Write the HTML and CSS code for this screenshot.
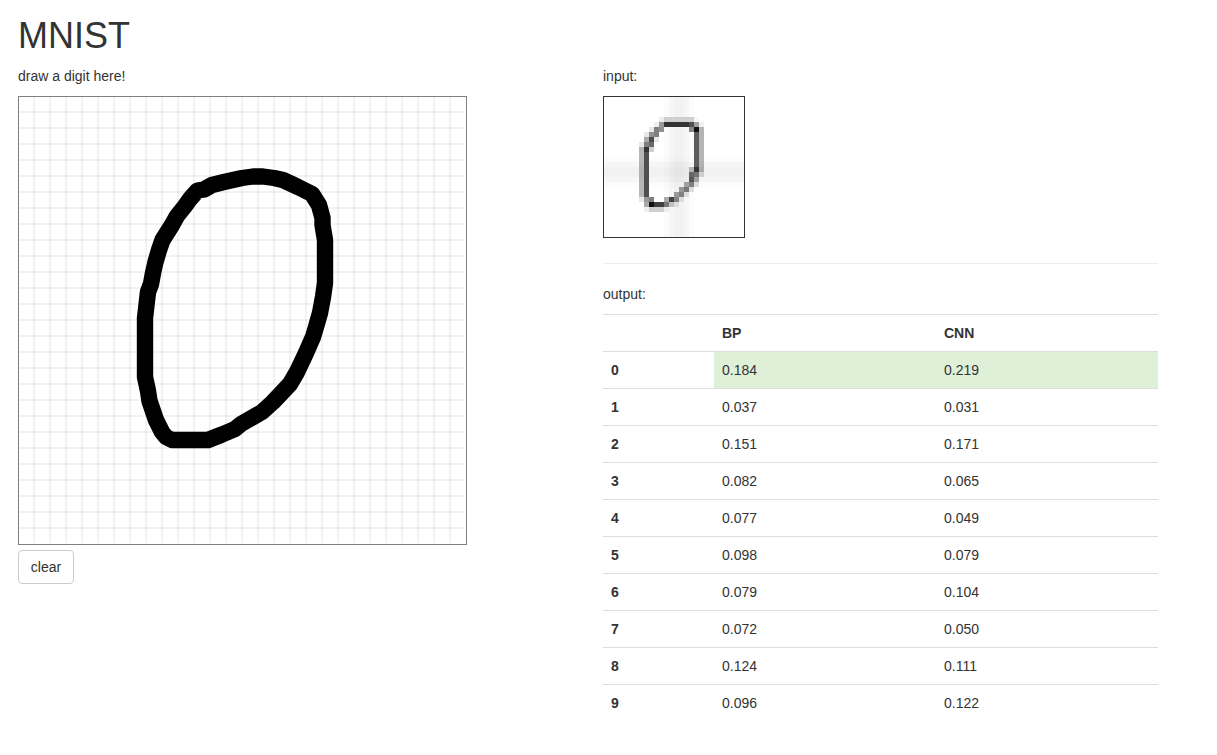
FILE: index.html
```html
<!DOCTYPE html>
<html lang="en">
<head>
<meta charset="utf-8">
<title>MNIST</title>
<link rel="stylesheet" href="styles.css">
</head>
<body>
<div class="container">
  <h1>MNIST</h1>
  <div class="row">
    <section class="col">
      <p>draw a digit here!</p>
      <svg class="pad" viewBox="0 0 449 449">
        <defs>
          <pattern id="grid" width="16" height="16" patternUnits="userSpaceOnUse">
            <g fill="#000" fill-opacity=".05" shape-rendering="crispEdges">
              <path d="M0 0H1V16H0ZM15 0H16V16H15Z"/>
              <path d="M0 0H16V1H0ZM0 15H16V16H0Z"/>
            </g>
          </pattern>
        </defs>
        <rect x="1" y="1" width="447" height="447" fill="#fff"/>
        <rect x="1" y="1" width="446" height="446" fill="url(#grid)"/>
        <rect x=".5" y=".5" width="448" height="448" fill="none" stroke="#808080"/>
        <path class="ink" transform="translate(-18 -96)" d="M204 189.500L197.500 190.500L190 199L185 206L177 216L172 225L162.500 240L159 250L155.500 262L153 273L151 284L148 292L146.500 305L145 318V377L148 391L149.500 401L156 420L162 432L166 437L172 440H208L222 434.500L235 429L241 424L262 412L273 402L290 384L297 372L306 353L313 337L316 327L320 313L323 297L325 283V240L322.500 225V218L319 205L312 194L298 187L283 180L274 178L263 176.500H253L242 178L224 182L212 185L204 189.500"/>
      </svg>
      <button class="btn" type="button">clear</button>
    </section>
    <section class="col">
      <p>input:</p>
      <svg class="preview" id="preview" viewBox="0 0 28 28"></svg>
      <hr>
      <p>output:</p>
      <table class="table">
        <tr><th></th><th>BP</th><th>CNN</th></tr>
        <tr><th>0</th><td class="success">0.184</td><td class="success">0.219</td></tr>
        <tr><th>1</th><td>0.037</td><td>0.031</td></tr>
        <tr><th>2</th><td>0.151</td><td>0.171</td></tr>
        <tr><th>3</th><td>0.082</td><td>0.065</td></tr>
        <tr><th>4</th><td>0.077</td><td>0.049</td></tr>
        <tr><th>5</th><td>0.098</td><td>0.079</td></tr>
        <tr><th>6</th><td>0.079</td><td>0.104</td></tr>
        <tr><th>7</th><td>0.072</td><td>0.050</td></tr>
        <tr><th>8</th><td>0.124</td><td>0.111</td></tr>
        <tr><th>9</th><td>0.096</td><td>0.122</td></tr>
      </table>
    </section>
  </div>
</div>
<script src="preview.js"></script>
</body>
</html>
```
FILE: styles.css
```css
* { box-sizing: border-box; }
body {
  margin: 0;
  background: #fff;
  color: #333;
  font: 14px/20px "Liberation Sans", Arial, sans-serif;
}
.container {
  width: 1170px;
  margin-left: 3px;
  padding-top: 16px;
}
h1 {
  margin: 0 15px 10px;
  font-size: 36px;
  font-weight: 400;
  line-height: 40px;
}
.row { display: flex; }
.col { width: 50%; padding: 0 15px; }
p { margin: 0 0 10px; }
.pad { display: block; width: 449px; height: 449px; }
.ink {
  fill: none;
  stroke: #000;
  stroke-width: 16.4px;
  stroke-linecap: round;
  stroke-linejoin: round;
}
.btn {
  display: block;
  width: 56px;
  height: 34px;
  margin-top: 5px;
  padding: 0;
  border: 1px solid #ccc;
  border-radius: 4px;
  background: #fff;
  color: #333;
  font: inherit;
}
.preview {
  display: block;
  width: 142px;
  height: 142px;
  border: 1px solid #333;
  shape-rendering: crispEdges;
}
hr {
  margin: 25px 0 20px;
  border: 0;
  border-top: 1px solid #eee;
}
.table {
  width: 100%;
  table-layout: fixed;
  border-collapse: collapse;
}
.table th,
.table td {
  width: 40%;
  height: 37px;
  padding: 8px;
  border-top: 1px solid #ddd;
  text-align: left;
}
.table th:first-child { width: 20%; }
.table .success { background: #dff0d8; }
```
FILE: preview.js
```js
// Each entry: row, first column, then one grey level (hex) per cell; ".." leaves a cell blank.
const rows = [
  [4, 11, "ed cf cf cf cf cf cf f6"],
  [5, 10, "ee 99 33 33 33 33 33 50 a0 f0"],
  [6, 9, "e8 80 90 .. .. .. .. .. 88 11 b4"],
  [7, 8, "e8 90 80 .. .. .. .. .. .. .. 5c b4"],
  [8, 8, "aa 4a e8 .. .. .. .. .. .. .. 5c b4"],
  [9, 7, "e8 80 6a .. .. .. .. .. .. .. .. 5c b4"],
  [10, 7, "b4 33 cf .. .. .. .. .. .. .. .. 5c b4"],
  [11, 7, "b8 4f .. .. .. .. .. .. .. .. .. 5c b4"],
  [12, 7, "b8 4f .. .. .. .. .. .. .. .. .. 5c b4"],
  [13, 7, "b4 4f .. .. .. .. .. .. .. .. .. 5c b0"],
  [14, 7, "b0 4f .. .. .. .. .. .. .. .. b4 33 aa"],
  [15, 7, "b0 4f .. .. .. .. .. .. .. .. 66 74 d0"],
  [16, 7, "b4 4f .. .. .. .. .. .. .. .. 55 a0"],
  [17, 7, "b8 4f .. .. .. .. .. .. .. a0 80 dd"],
  [18, 7, "b8 4f .. .. .. .. .. .. 99 77 dd"],
  [19, 7, "b8 4f .. .. .. .. .. 99 80 dd"],
  [20, 7, "e8 99 80 .. .. aa 44 84 dd"],
  [21, 8, "aa 11 3f 3f 77 c0 dd"],
  [22, 8, "ee cf cf cf ee"]
];
const svg = document.getElementById("preview");
function rect(x, y, w, h, fill, opacity) {
  const r = document.createElementNS("http://www.w3.org/2000/svg", "rect");
  const attrs = { x, y, width: w, height: h, fill, "fill-opacity": opacity };
  for (const name in attrs) r.setAttribute(name, attrs[name]);
  svg.appendChild(r);
}
[.012, .036, .05, .05, .036, .012].forEach((a, i) => {
  rect(12 + i, 0, 1, 28, "#000", a);
  rect(0, 12 + i, 28, 1, "#000", a);
});
for (const [y, x, cells] of rows) {
  cells.split(" ").forEach((c, i) => {
    if (c !== "..") rect(x + i, y, 1, 1, "#" + c + c + c, 1);
  });
}
```
